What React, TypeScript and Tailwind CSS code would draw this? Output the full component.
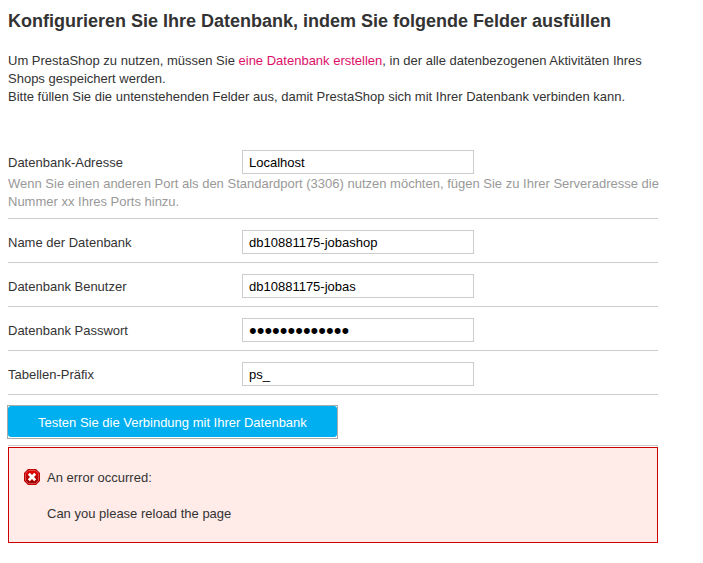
type Field = {
  id: string;
  label: string;
  value: string;
  type?: string;
  help?: string;
};

const fields: Field[] = [
  {
    id: "dbServer",
    label: "Datenbank-Adresse",
    value: "Localhost",
    help: "Wenn Sie einen anderen Port als den Standardport (3306) nutzen möchten, fügen Sie zu Ihrer Serveradresse die Nummer xx Ihres Ports hinzu.",
  },
  { id: "dbName", label: "Name der Datenbank", value: "db10881175-jobashop" },
  { id: "dbLogin", label: "Datenbank Benutzer", value: "db10881175-jobas" },
  { id: "dbPassword", label: "Datenbank Passwort", value: "abcdefghijklm", type: "password" },
  { id: "dbPrefix", label: "Tabellen-Präfix", value: "ps_" },
];

function FieldRow({ id, label, value, type = "text", help }: Field) {
  // password dots come out too small at the body size
  const size = type === "password" ? "pt-0.5 text-[22px]" : "";

  return (
    <div className="border-b border-[#cccccc] pt-[11px] pb-2">
      <div className="flex items-center">
        <label htmlFor={id} className="w-[234px] shrink-0 pt-0.5">
          {label}
        </label>
        <input
          id={id}
          type={type}
          defaultValue={value}
          className={`h-6 w-[232px] border border-[#cccccc] bg-white px-1.5 text-black outline-none ${size}`}
        />
      </div>
      {help && <p className="mt-px -mr-2 -mb-px text-[#999999]">{help}</p>}
    </div>
  );
}

function ErrorIcon() {
  return (
    <svg viewBox="0 0 16 16" className="h-4 w-4 shrink-0" aria-hidden="true">
      <defs>
        <linearGradient id="errorFill" x1="0" y1="0" x2="0" y2="1">
          <stop offset="0" stopColor="#e80000" />
          <stop offset="1" stopColor="#980000" />
        </linearGradient>
      </defs>
      <path d="M4 0h8l4 4v8l-4 4H4l-4-4V4z" fill="#c00000" />
      <path d="M4.4 1.5h7.2l2.9 2.9v7.2l-2.9 2.9H4.4l-2.9-2.9V4.4z" fill="url(#errorFill)" stroke="#d85050" strokeWidth="1" />
      <path d="M3.8 5.8l2-2L8 6l2.2-2.2 2 2L10 8l2.2 2.2-2 2L8 10l-2.2 2.2-2-2L6 8z" fill="#ffffff" />
    </svg>
  );
}

export default function App() {
  return (
    <main className="max-w-[666px] px-2 pt-[9px] font-['Liberation_Sans',Arial,sans-serif] text-[13px] leading-[18px] text-[#333333]">
      <h1 className="text-[18px] leading-6 font-bold">
        Konfigurieren Sie Ihre Datenbank, indem Sie folgende Felder ausfüllen
      </h1>

      <p className="mt-[19px]">
        Um PrestaShop zu nutzen, müssen Sie{" "}
        <a href="#datenbank" className="text-[#db0f69]">
          eine Datenbank erstellen
        </a>
        , in der alle datenbezogenen Aktivitäten Ihres Shops gespeichert werden.
        <br />
        Bitte füllen Sie die untenstehenden Felder aus, damit PrestaShop sich mit Ihrer Datenbank verbinden kann.
      </p>

      <form className="mt-[33px]" onSubmit={(e) => e.preventDefault()}>
        {fields.map((field) => (
          <FieldRow key={field.id} {...field} />
        ))}

        {/* the frame around the button is 1px wider than the column on the left */}
        <div className="border-b border-[#cccccc] pt-2.5 pb-1.5">
          <div className="-ml-px w-fit border border-[#aaaaaa] pb-px">
            <button type="submit" className="h-[31px] rounded-[3px] bg-[#00aff0] px-[30px] pt-0.5 text-white">
              Testen Sie die Verbindung mit Ihrer Datenbank
            </button>
          </div>
        </div>
      </form>

      <div role="alert" className="mt-px flex gap-[7px] border border-[#cc0000] bg-[#ffebe8] px-[15px] pt-[21px] pb-[19px]">
        <ErrorIcon />
        <div>
          <p>An error occurred:</p>
          <p className="mt-[18px]">Can you please reload the page</p>
        </div>
      </div>
    </main>
  );
}
